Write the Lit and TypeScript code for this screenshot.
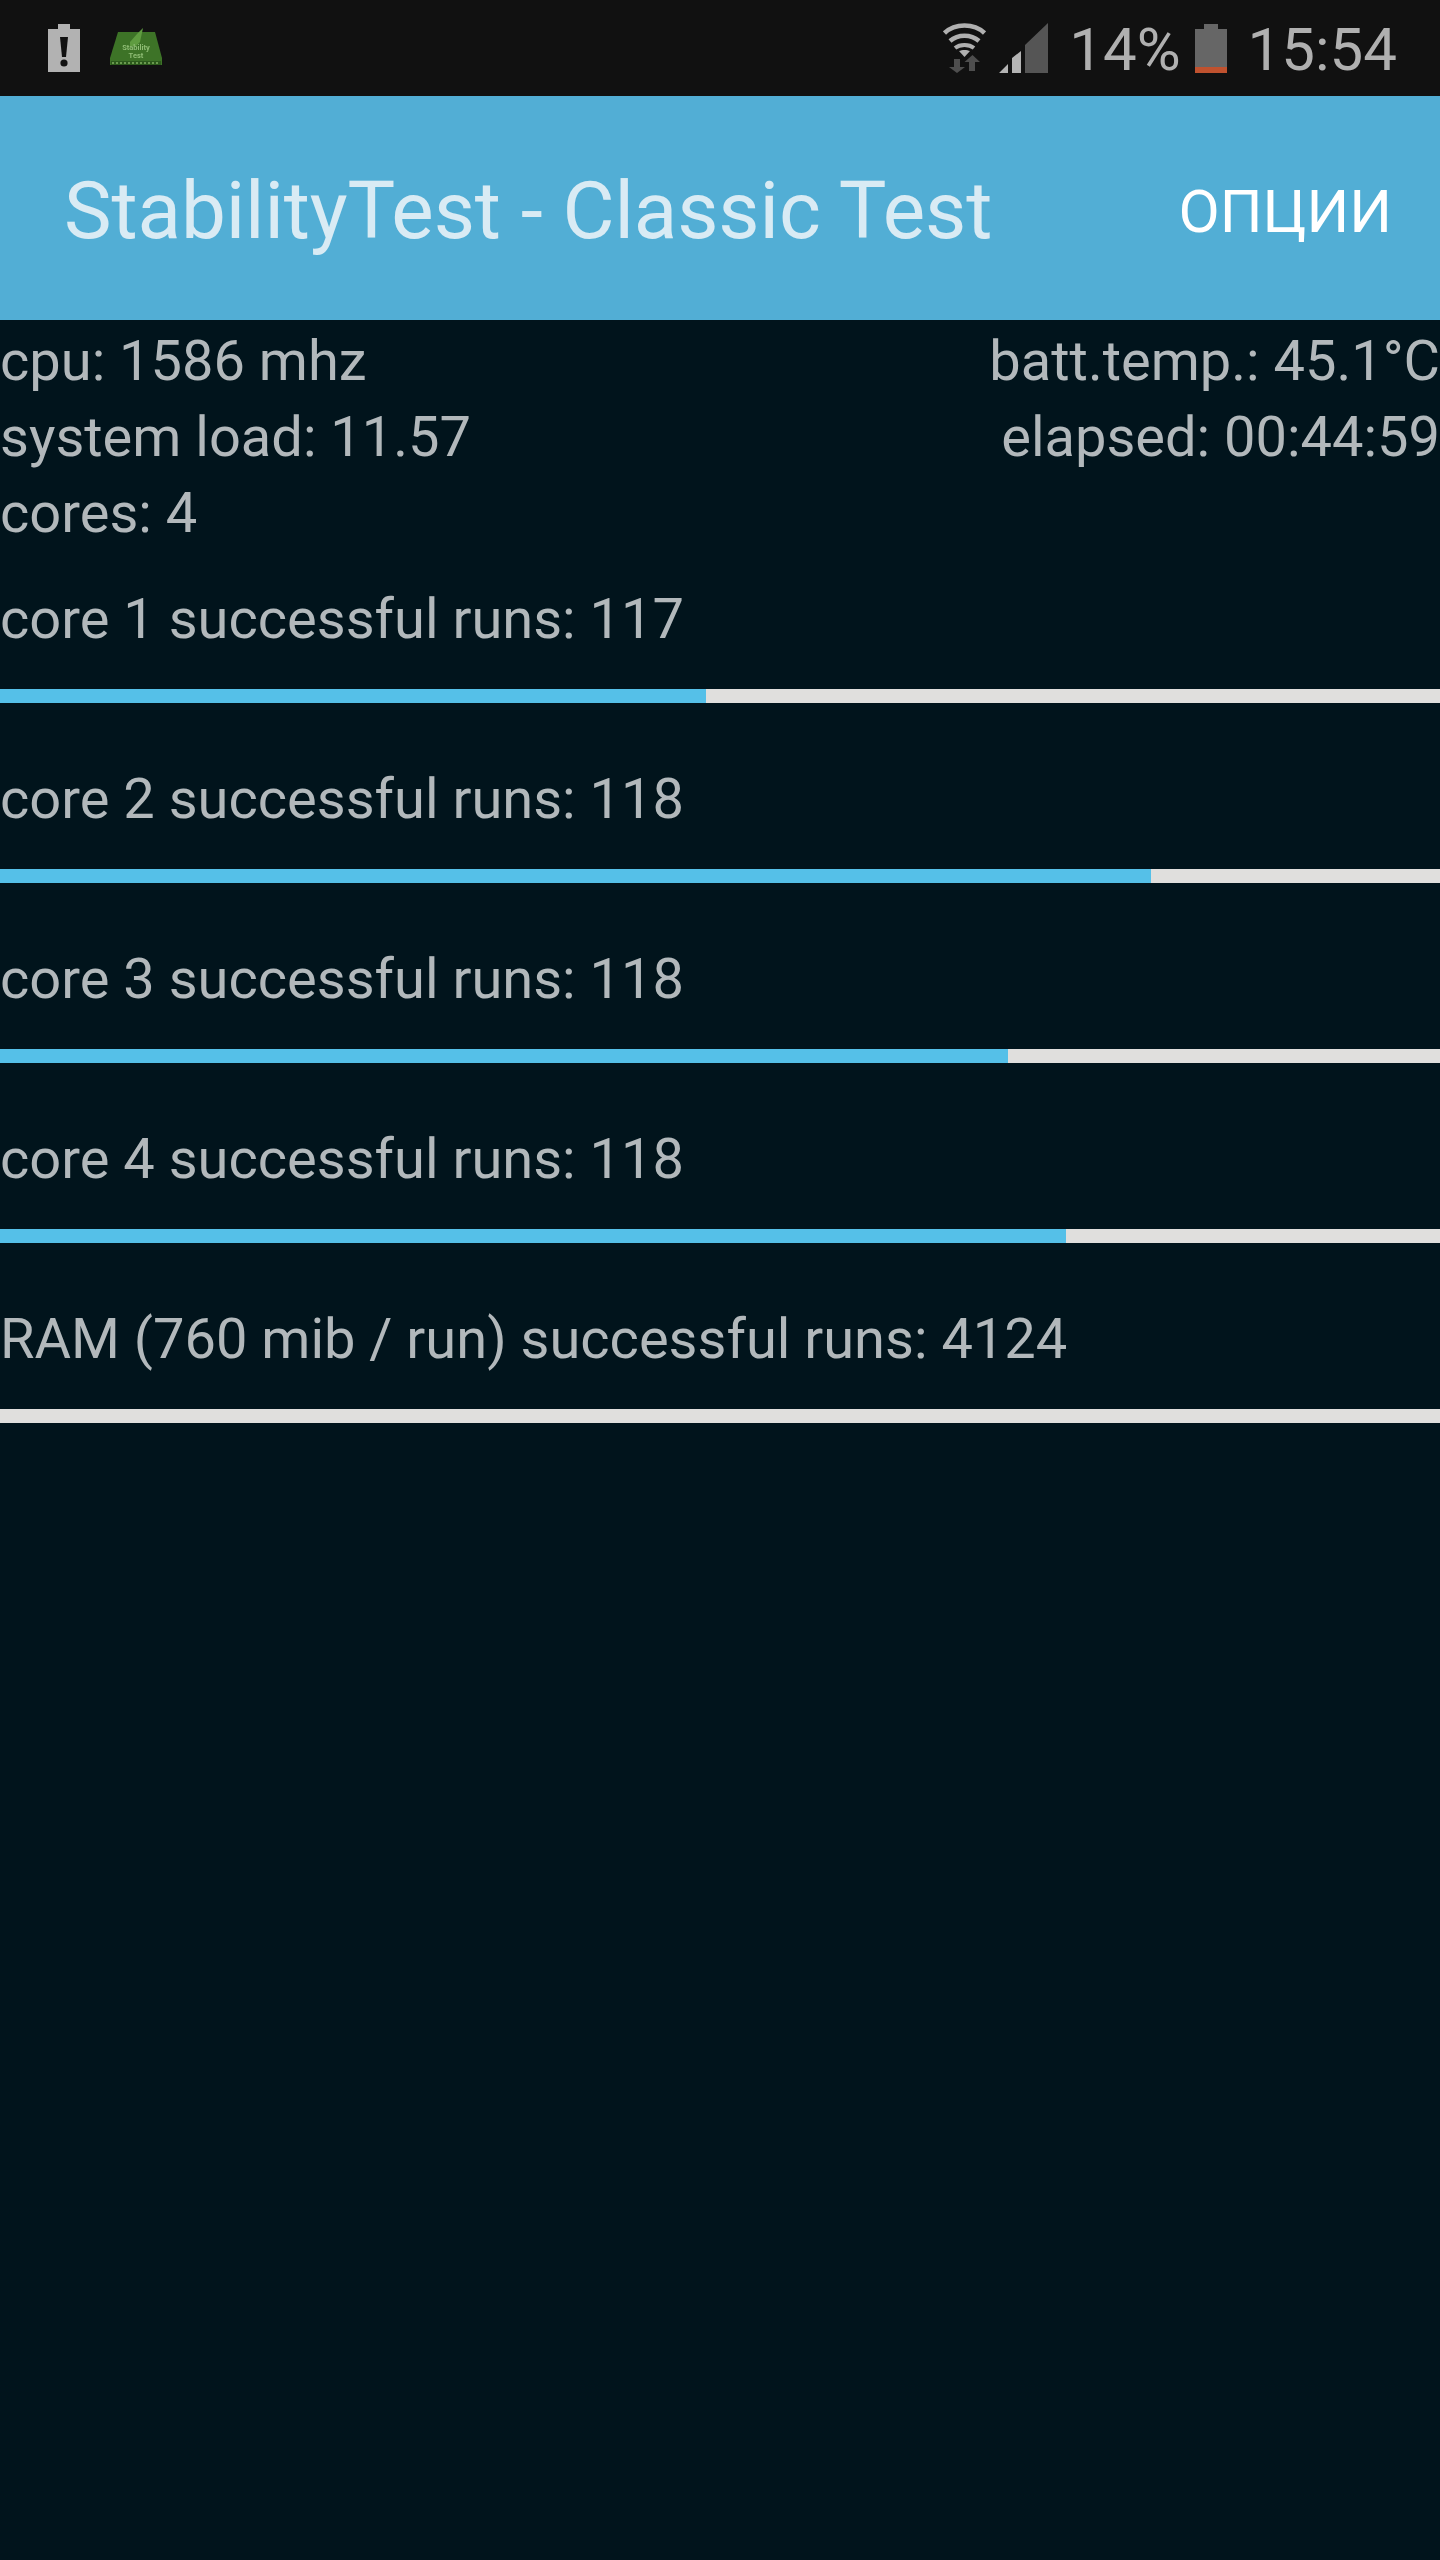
import { LitElement, html, css } from "lit";
import { customElement } from "lit/decorators.js";

@customElement("app-root")
export class AppRoot extends LitElement {
  static styles = css`
    :host { display: block; width: 1440px; height: 2560px; background: #01141c; font-family: Roboto, sans-serif; overflow: hidden; }
    .status { height: 96px; background: #111; display: flex; align-items: center; color: #b0b0b0; box-sizing: border-box; padding: 0 43px 0 48px; }
    .status svg { display: block; flex: none; }
    .spacer { flex: 1; }
    .stxt { font-size: 60px; font-weight: 400; line-height: 96px; color: #b0b0b0; padding-top: 4px; }
    .alert { margin-right: 30px; }
    .chip { filter: blur(0.5px); }
    .wifi { margin-right: 13px; }
    .sig { margin-right: 21px; }
    .batt { margin: 0 21px 0 14px; }
    .bar { height: 224px; background: #52aed5; display: flex; align-items: center; justify-content: space-between; padding: 6px 48px 0 64px; box-sizing: border-box; }
    .title { font-size: 80px; color: #d9ebf4; font-weight: 400; letter-spacing: -0.1px; }
    .opt { font-size: 60px; color: #fff; }
    .info { display: grid; grid-template-columns: 1fr auto; color: #b2b8bb; font-size: 56px; line-height: 76px; padding: 3px 0 0 0; }
    .r { text-align: right; }
    .core { color: #b2b8bb; font-size: 56px; line-height: 76px; }
    .item { height: 180px; display: flex; flex-direction: column; }
    .item .core { margin-top: 18px; height: 76px; }
    .first { margin-top: 12px; }
    .track { height: 14px; background: #e0dfdd; margin-top: 32px; }
    .fill { height: 14px; background: #55c0e8; }
  `;
  render() {
    const items: [string, number][] = [
      ["core 1 successful runs: 117", 706],
      ["core 2 successful runs: 118", 1151],
      ["core 3 successful runs: 118", 1008],
      ["core 4 successful runs: 118", 1066],
      ["RAM (760 mib / run) successful runs: 4124", 0],
    ];
    return html`
      <div class="status">
        <svg class="alert" width="32" height="48" viewBox="0 0 32 48"><path fill="#b2b2b2" d="M10 0h12v5h10v43H0V5h10z"/><path fill="#111" d="M12 13h8l-2 20h-4z"/><circle cx="16" cy="39" r="3.6" fill="#111"/></svg>
        <svg class="chip" width="52" height="40" viewBox="0 0 52 40"><path fill="#3d7327" d="M8 4h37l7 26v7H0v-7z"/><path fill="#5f9c40" d="M20 14l7-8 6-6-3 14-4 4h-6z"/><rect x="1" y="33" width="50" height="4" fill="#2c5a1c"/><path stroke="#7fb060" stroke-width="1.5" stroke-dasharray="2 2" d="M2 35h48"/><text x="26" y="22" text-anchor="middle" font-family="Roboto, sans-serif" font-size="7.5" font-weight="700" fill="#8fbd75">Stability</text><text x="26" y="29.5" text-anchor="middle" font-family="Roboto, sans-serif" font-size="7.5" font-weight="700" fill="#8fbd75">Test</text></svg>
        <div class="spacer"></div>
        <svg class="wifi" width="43" height="50" viewBox="0 0 43 50"><g fill="none" stroke="#b0b0b0" stroke-width="4.5"><path d="M1.5 10C12 0 31 0 41.5 10"/><path d="M7 18c8-7 21-7 29 0"/></g><path fill="none" stroke="#b0b0b0" stroke-width="4" d="M12 25c5-4 14-4 19 0"/><path fill="#b0b0b0" d="M16 28c3-1.500 8-1.500 11 0l-5.500 6z"/><path fill="#4e4e4e" d="M11 36h6v8h5l-8 6-8-6h5zM26 48h6v-9h5l-7.500-7-8 7h4.500z"/></svg>
        <svg class="sig" width="49" height="50" viewBox="0 0 49 50"><path fill="#b4b4b4" d="M0 50l9-9v9zM13 50V35l9-7v22z"/><path fill="#555" d="M26 50V22L49 0v50z"/></svg>
        <span class="stxt">14%</span>
        <svg class="batt" width="32" height="49" viewBox="0 0 32 49"><path fill="#666" d="M9 0h14v5h9v38H0V5h9z"/><rect y="43" width="32" height="6" fill="#c0522f"/></svg>
        <span class="stxt">15:54</span>
      </div>
      <div class="bar"><span class="title">StabilityTest - Classic Test</span><span class="opt">ОПЦИИ</span></div>
      <div class="info">
        <span>cpu: 1586 mhz</span><span class="r">batt.temp.: 45.1°C</span>
        <span>system load: 11.57</span><span class="r">elapsed: 00:44:59</span>
        <span>cores: 4</span><span></span>
      </div>
      <div class="first"></div>
      ${items.map(([t, w]) => html`
        <div class="item"><div class="core">${t}</div>
          <div class="track"><div class="fill" style="width:${w}px"></div></div>
        </div>`)}
    `;
  }
}
